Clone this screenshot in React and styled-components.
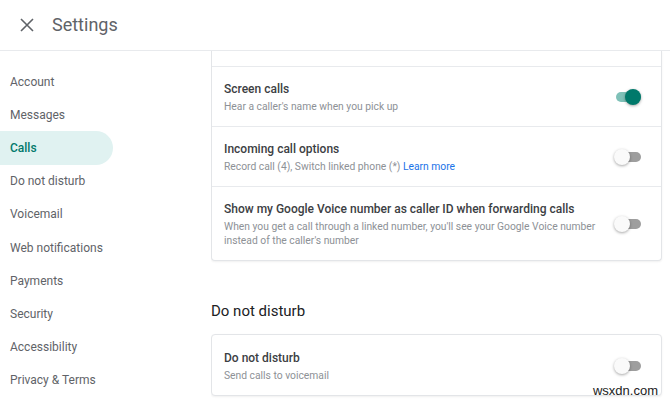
import React from 'react'
import styled, { createGlobalStyle } from 'styled-components'

const GlobalStyle = createGlobalStyle`
  html, body {
    margin: 0;
    padding: 0;
    background: #fff;
    font-family: Roboto, "Liberation Sans", Arial, sans-serif;
  }
  * { box-sizing: border-box; }
`

const navItems = [
    'Account',
    'Messages',
    'Calls',
    'Do not disturb',
    'Voicemail',
    'Web notifications',
    'Payments',
    'Security',
    'Accessibility',
    'Privacy & Terms'
]

class App extends React.Component {
    render() {
        return (
            <Page>
                <GlobalStyle />
                <Header>
                    <CloseButton aria-label='close'>
                        <svg width='14' height='14' viewBox='0 0 14 14'>
                            <path d='M1 1 L13 13 M13 1 L1 13' stroke='#5f6368' strokeWidth='1.6' />
                        </svg>
                    </CloseButton>
                    <Title>Settings</Title>
                </Header>
                <Body>
                    <Sidebar>
                        {navItems.map(item => (
                            <NavItem key={item} $active={item === 'Calls'}>{item}</NavItem>
                        ))}
                    </Sidebar>
                    <Main>
                        <Card $clipped>
                            <Stub />
                            <Row>
                                <RowText>
                                    <RowTitle>Screen calls</RowTitle>
                                    <RowSub>Hear a caller's name when you pick up</RowSub>
                                </RowText>
                                <Toggle $on />
                            </Row>
                            <Row>
                                <RowText>
                                    <RowTitle>Incoming call options</RowTitle>
                                    <RowSub>Record call (4), Switch linked phone (*) <LearnMore>Learn more</LearnMore></RowSub>
                                </RowText>
                                <Toggle />
                            </Row>
                            <Row>
                                <RowText>
                                    <RowTitle>Show my Google Voice number as caller ID when forwarding calls</RowTitle>
                                    <RowSub>When you get a call through a linked number, you'll see your Google Voice number instead of the caller's number</RowSub>
                                </RowText>
                                <Toggle />
                            </Row>
                        </Card>
                        <SectionHeading>Do not disturb</SectionHeading>
                        <Card>
                            <Row>
                                <RowText>
                                    <RowTitle>Do not disturb</RowTitle>
                                    <RowSub>Send calls to voicemail</RowSub>
                                </RowText>
                                <Toggle />
                            </Row>
                        </Card>
                    </Main>
                </Body>
                <Watermark>wsxdn.com</Watermark>
            </Page>
        )
    }
}

const Page = styled.div`
position: relative;
width: 670px;
height: 400px;
overflow: hidden;
background: #fff;
`

const Header = styled.header`
height: 51px;
display: flex;
align-items: center;
padding-left: 20px;
border-bottom: 1px solid #e8eaed;
`

const CloseButton = styled.div`
width: 14px;
height: 14px;
display: flex;
margin-right: 18px;
`

const Title = styled.h1`
margin: 0;
font-size: 18px;
font-weight: 400;
color: #5f6368;
margin-top: -2px;
`

const Body = styled.div`
display: flex;
height: 349px;
`

const Sidebar = styled.nav`
width: 211px;
flex-shrink: 0;
padding-top: 14px;
display: flex;
flex-direction: column;
`

const NavItem = styled.div`
height: 33.2px;
width: 113px;
display: flex;
align-items: center;
padding-left: 10px;
font-size: 12px;
white-space: nowrap;
color: ${p => p.$active ? '#00796b' : '#5f6368'};
font-weight: ${p => p.$active ? 500 : 400};
background: ${p => p.$active ? '#e0f2f1' : 'transparent'};
border-radius: 0 17px 17px 0;
`

const Main = styled.main`
flex: 1;
padding-right: 8px;
overflow: hidden;
`

const Card = styled.section`
background: #fff;
border: 1px solid #e3e5e8;
border-top: ${p => p.$clipped ? 'none' : '1px solid #e3e5e8'};
border-radius: ${p => p.$clipped ? '0 0 4px 4px' : '4px'};
box-shadow: 0 1px 2px rgba(60, 64, 67, 0.08);
`

const Stub = styled.div`
height: 16px;
border-bottom: 1px solid #e8eaed;
`

const Row = styled.div`
display: flex;
align-items: center;
padding: 13px 20px 12px 12px;
min-height: 60px;
border-bottom: 1px solid #e8eaed;
&:last-child { border-bottom: none; }
`

const RowText = styled.div`
flex: 1;
padding-right: 14px;
`

const RowTitle = styled.div`
font-size: 12px;
font-weight: 500;
line-height: 18px;
color: #3c4043;
`

const RowSub = styled.div`
font-size: 10.3px;
line-height: 14px;
margin-top: 2px;
color: #8d9196;
`

const LearnMore = styled.a`
color: #1a73e8;
text-decoration: none;
`

const Toggle = styled.span`
position: relative;
width: 27px;
height: 16px;
flex-shrink: 0;
display: inline-block;
&::before {
    content: '';
    position: absolute;
    left: 2px;
    right: 0;
    top: 3px;
    height: 10px;
    border-radius: 5px;
    background: ${p => p.$on ? '#7fc1b8' : '#9e9e9e'};
}
&::after {
    content: '';
    position: absolute;
    top: 0;
    left: ${p => p.$on ? '11px' : '0'};
    width: 16px;
    height: 16px;
    border-radius: 50%;
    background: ${p => p.$on ? '#00796b' : '#fafafa'};
    box-shadow: 0 1px 3px rgba(0, 0, 0, 0.35);
}
`

const SectionHeading = styled.h2`
margin: 40px 0 13px;
font-size: 15px;
font-weight: 400;
line-height: 20px;
color: #202124;
`

const Watermark = styled.div`
position: absolute;
right: 12px;
bottom: 2px;
font-family: "Liberation Sans", Arial, sans-serif;
font-size: 13px;
color: #222;
`

export default App
